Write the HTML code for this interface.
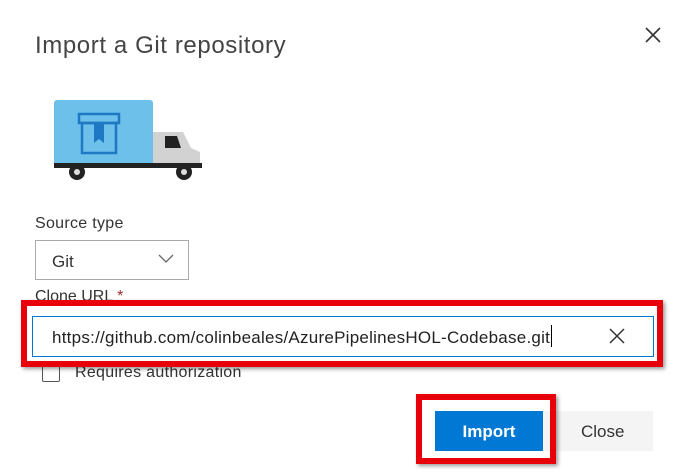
<!DOCTYPE html>
<html><head><meta charset="utf-8"><style>
body{margin:0;width:688px;height:476px;background:#fff;font-family:"Liberation Sans",sans-serif;position:relative;overflow:hidden;color:#333}
.a{position:absolute}
</style></head><body>
<div class="a" style="left:35px;top:32px;font-size:24px;color:#444;letter-spacing:0.6px">Import a Git repository</div>
<svg class="a" style="left:644px;top:26px" width="18" height="18"><path d="M2 2L16 16M16 2L2 16" stroke="#333" stroke-width="1.6"/></svg>
<svg class="a" style="left:50px;top:96px" width="160" height="88">
<rect x="4" y="4" width="99" height="64" rx="3" fill="#6cc0ea"/>
<rect x="4" y="64" width="99" height="4" fill="#6cc0ea"/>
<rect x="29" y="18" width="40" height="9" fill="none" stroke="#1f78c4" stroke-width="2.5"/>
<rect x="32" y="27" width="34" height="30" fill="none" stroke="#1f78c4" stroke-width="2.5"/>
<path d="M44 28v19l5-4 5 4V28z" fill="#1f78c4"/>
<path d="M103 36h30l8 16 9 4 v14h-47z" fill="#d2d2d2"/>
<path d="M115 40h12l4 12h-16z" fill="#222"/>
<rect x="4" y="67" width="148" height="5" fill="#222"/>
<circle cx="27" cy="76" r="8" fill="#222"/><circle cx="27" cy="76" r="3" fill="#ddd"/>
<circle cx="134" cy="76" r="8" fill="#222"/><circle cx="134" cy="76" r="3" fill="#ddd"/>
</svg>
<div class="a" style="left:35px;top:215px;font-size:16px;color:#333;letter-spacing:0.3px">Source type</div>
<div class="a" style="left:35px;top:240px;width:152px;height:38px;border:1px solid #aaa"></div>
<div class="a" style="left:52px;top:252px;font-size:17px">Git</div>
<svg class="a" style="left:158px;top:254px" width="16" height="10"><path d="M1 1l7 7 7-7" fill="none" stroke="#666" stroke-width="1.3"/></svg>
<div class="a" style="left:35px;top:288px;font-size:16px">Clone URL <span style="color:#a4262c">*</span></div>
<div class="a" style="left:42px;top:364px;width:16px;height:16px;border:1px solid #555;border-radius:2px"></div>
<div class="a" style="left:75px;top:364px;font-size:16px;letter-spacing:0.3px">Requires authorization</div>
<div class="a" style="left:21px;top:300px;width:630px;height:55px;border:6px solid #e8000b;box-shadow:2px 2px 4px rgba(0,0,0,.4)"></div>
<div class="a" style="left:32px;top:316px;width:620px;height:39px;border:1px solid #0078d4;background:#fff"></div>
<div class="a" style="left:52px;top:328px;font-size:17px;color:#222;letter-spacing:0.25px">https://github.com/colinbeales/AzurePipelinesHOL-Codebase.git</div>
<div class="a" style="left:551px;top:325px;width:1px;height:22px;background:#000"></div>
<svg class="a" style="left:609px;top:328px" width="16" height="16"><path d="M1 1L15 15M15 1L1 15" stroke="#333" stroke-width="1.5"/></svg>
<div class="a" style="left:543px;top:411px;width:110px;height:40px;background:#f4f4f4"></div>
<div class="a" style="left:581px;top:422px;font-size:17px;color:#333">Close</div>
<div class="a" style="left:416px;top:394px;width:128px;height:58px;border:6px solid #e8000b;box-shadow:2px 2px 4px rgba(0,0,0,.4)"></div>
<div class="a" style="left:435px;top:411px;width:108px;height:40px;background:#0078d4;color:#fff;font-size:17px;text-align:center;line-height:42px;font-weight:bold">Import</div>
</body></html>
